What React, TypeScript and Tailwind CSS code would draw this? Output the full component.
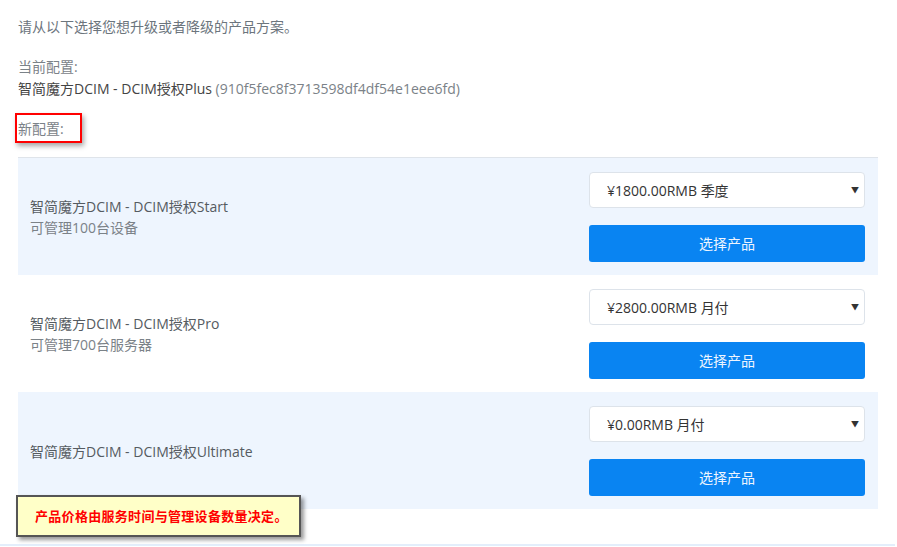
import React from 'react';

interface Plan {
  name: string;
  desc?: string;
  price: string;
  shaded: boolean;
}

const PLANS: Plan[] = [
  { name: '智简魔方DCIM - DCIM授权Start', desc: '可管理100台设备', price: '¥1800.00RMB 季度', shaded: true },
  { name: '智简魔方DCIM - DCIM授权Pro', desc: '可管理700台服务器', price: '¥2800.00RMB 月付', shaded: false },
  { name: '智简魔方DCIM - DCIM授权Ultimate', price: '¥0.00RMB 月付', shaded: true },
];

const font = { fontFamily: '"Open Sans", "Noto Sans CJK SC", sans-serif' };

function PlanRow({ plan }: { plan: Plan }) {
  return (
    <div className={`flex items-center justify-between pl-3 pr-[13px] pt-[14px] pb-[13px] ${plan.shaded ? 'bg-[#eef5fe]' : 'bg-white'}`}>
      <div className="text-[14px] leading-[21px]">
        <div className="text-[#555b61]">{plan.name}</div>
        {plan.desc && <div className="text-[#7b8288]">{plan.desc}</div>}
      </div>
      <div className="flex w-[276px] flex-col gap-[17px]">
        <div className="relative flex h-[36px] items-center rounded-[4px] border border-[#dde3ea] bg-white pl-[17px] text-[14px] text-[#333]">
          {plan.price}
          <span className="absolute right-[5px] top-[11px] text-[8px] text-[#333]">▼</span>
        </div>
        <button className="h-[37px] w-full rounded-[3px] bg-[#0984f2] text-[14px] text-[#eef5ff]">
          选择产品
        </button>
      </div>
    </div>
  );
}

export default function App() {
  return (
    <div className="relative h-[547px] w-[897px] overflow-hidden bg-white" style={font}>
      <div className="w-[896px] px-[18px] pt-4">
        <div className="text-[14px] leading-[22px] text-[#6c757d]">请从以下选择您想升级或者降级的产品方案。</div>
        <div className="mt-[18px] text-[14px] leading-[22px] text-[#7b8288]">当前配置:</div>
        <div className="text-[14px] leading-[22px] text-[#444]">
          智简魔方DCIM - DCIM授权Plus <span className="text-[#7b8288]">(910f5fec8f3713598df4df54e1eee6fd)</span>
        </div>
        <div className="relative mt-[18px] text-[14px] leading-[22px] text-[#7b8288]">
          新配置:
          <div className="absolute left-[-3px] top-[-5px] h-[30px] w-[67px] border-2 border-[#f00] shadow-[2px_3px_5px_rgba(0,0,0,0.35)]" />
        </div>
        <div className="mt-[17px] border-t border-[#dfe4ea]">
          {PLANS.map(p => <PlanRow key={p.name} plan={p} />)}
        </div>
      </div>

      <div className="absolute bottom-[1px] left-0 h-[2px] w-[895px] bg-[#e3eefb]" />

      <div className="absolute left-[16px] top-[495px] flex h-[42px] w-[285px] items-center border-2 border-[#555] bg-[#ffffc8] pl-[17px] shadow-[3px_3px_4px_rgba(0,0,0,0.4)]">
        <span className="text-[13px] font-bold tracking-[0.3px] text-[#f00]" style={{ fontFamily: '"Noto Sans CJK SC", sans-serif' }}>
          产品价格由服务时间与管理设备数量决定。
        </span>
      </div>
    </div>
  );
}
